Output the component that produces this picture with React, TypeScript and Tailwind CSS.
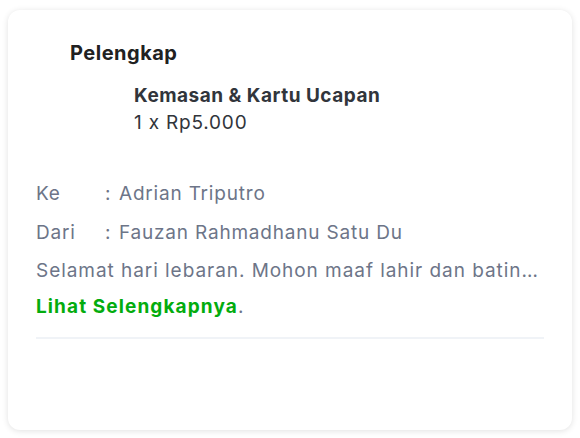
export default function App() {
  return (
    <div className="w-[580px] h-[438px] bg-white px-[8px] pt-[10px] font-['Inter',sans-serif]">
      <div className="h-[420px] w-[564px] rounded-[12px] bg-white shadow-[0_1px_6px_rgba(0,0,0,0.12)] px-[28px] pt-[30px]">
        <div className="pl-[34px] text-[20px] font-bold leading-[26px] tracking-[0.5px] text-[#212121]">Pelengkap</div>
        <div className="pl-[98px] mt-[17px] text-[19px] leading-[26px] text-[#31353b]">
          <div className="font-bold tracking-[0.5px]">Kemasan &amp; Kartu Ucapan</div>
          <div className="mt-[1px] tracking-[0.8px]">1 x Rp5.000</div>
        </div>
        <div className="mt-[45px] text-[19px] text-[#6d7588] leading-[26px] tracking-[0.8px]">
          <div className="flex">
            <span className="w-[69px]">Ke</span>
            <span className="w-[14px]">:</span>
            <span>Adrian Triputro</span>
          </div>
          <div className="flex mt-[13px]">
            <span className="w-[69px]">Dari</span>
            <span className="w-[14px]">:</span>
            <span>Fauzan Rahmadhanu Satu Du</span>
          </div>
          <div className="mt-[12px] truncate tracking-[0.95px]">Selamat hari lebaran. Mohon maaf lahir dan batin ya semuanya</div>
          <div className="mt-[10px]"><span className="font-bold text-[#03ac0e] tracking-[1.1px]">Lihat Selengkapnya</span>.</div>
        </div>
        <div className="mt-[17px] h-[2px] bg-[#f0f3f7]"></div>
      </div>
    </div>
  );
}
